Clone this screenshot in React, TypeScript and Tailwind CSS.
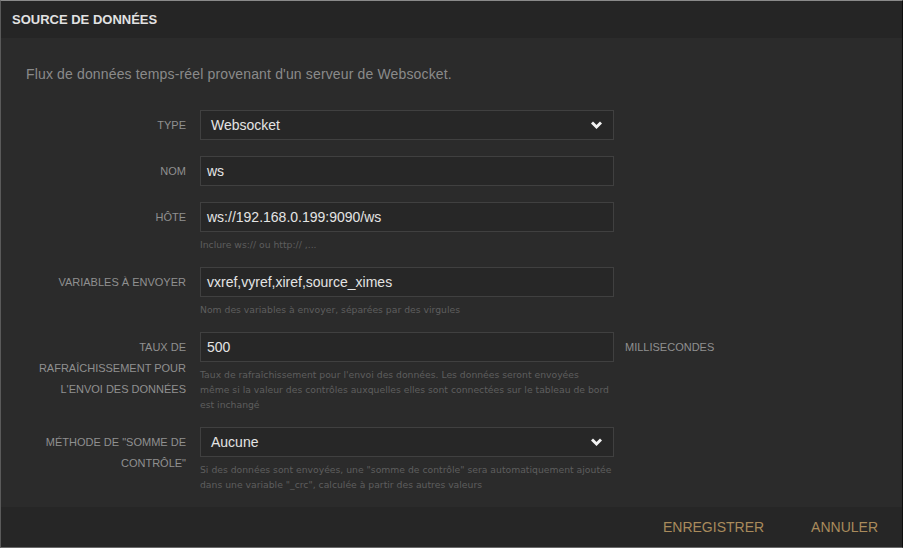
const LABEL = 'w-[160px] shrink-0 pt-[5px] text-right text-[11px] uppercase leading-[21px] text-[#909090]';
const HELP = "mt-[5px] mb-[-1px] whitespace-nowrap font-['DejaVu_Sans',sans-serif] text-[9.25px] leading-[15px] text-[#5e5e5e]";

function Chevron() {
    return (
        <svg className="h-[9px] w-[11px]" viewBox="0 0 11 9" fill="none" stroke="#f2f2f2" strokeWidth="3" strokeLinecap="square">
            <path d="M2 2.5 L5.5 6 L9 2.5" />
        </svg>
    );
}

function Field({
    label,
    value,
    help,
    select,
    unit,
}: {
    label: React.ReactNode;
    value: string;
    help?: React.ReactNode;
    select?: boolean;
    unit?: string;
}) {
    return (
        <div className="mb-[16px] flex gap-[14px]">
            <div className={LABEL}>{label}</div>
            <div className="w-[414px] shrink-0">
                <div
                    className={`flex h-[30px] items-center justify-between border border-[#404040] bg-[#272727] text-[14px] text-[#e4e4e4] ${
                        select ? 'pl-[10px] pr-[11px]' : 'pl-[6px]'
                    }`}
                >
                    <span>{value}</span>
                    {select && <Chevron />}
                </div>
                {help && <div className={HELP}>{help}</div>}
            </div>
            {unit && (
                <div className="-ml-[3px] flex h-[30px] items-center text-[11px] uppercase text-[#909090]">{unit}</div>
            )}
        </div>
    );
}

export default function App() {
    return (
        <div className="flex h-[548px] w-[903px] flex-col border-t border-r border-b border-l border-t-[#8a8a8a] border-r-[#0e0e0e] border-b-[#6a6a6a] border-l-[#5a5a5a] bg-[#2b2b2b] font-['Liberation_Sans',Arial,sans-serif]">
            {/* Header */}
            <div className="flex h-[37px] shrink-0 items-center bg-[#252525] pl-[11px] text-[13px] font-bold text-[#e2e2e2]">
                SOURCE DE DONNÉES
            </div>

            {/* Body */}
            <div className="flex-1 pl-[25px] pt-[26px]">
                <p className="mb-[26px] text-[14px] leading-[20px] tracking-[0.15px] text-[#8a8a8a]">
                    Flux de données temps-réel provenant d'un serveur de Websocket.
                </p>

                <Field label="Type" value="Websocket" select />
                <Field label="Nom" value="ws" />
                <Field label="Hôte" value="ws://192.168.0.199:9090/ws" help="Inclure ws:// ou http:// ,..." />
                <Field
                    label="Variables à envoyer"
                    value="vxref,vyref,xiref,source_ximes"
                    help="Nom des variables à envoyer, séparées par des virgules"
                />
                <Field
                    label={
                        <>
                            Taux de
                            <br />
                            rafraîchissement pour
                            <br />
                            l'envoi des données
                        </>
                    }
                    value="500"
                    unit="Millisecondes"
                    help={
                        <>
                            Taux de rafraîchissement pour l'envoi des données. Les données seront envoyées
                            <br />
                            même si la valeur des contrôles auxquelles elles sont connectées sur le tableau de bord
                            <br />
                            est inchangé
                        </>
                    }
                />
                <Field
                    label={
                        <>
                            Méthode de "somme de
                            <br />
                            contrôle"
                        </>
                    }
                    value="Aucune"
                    select
                    help={
                        <>
                            Si des données sont envoyées, une "somme de contrôle" sera automatiquement ajoutée
                            <br />
                            dans une variable "_crc", calculée à partir des autres valeurs
                        </>
                    }
                />
            </div>

            {/* Footer */}
            <div className="flex h-[40px] shrink-0 items-center justify-end gap-[47px] bg-[#262626] pr-[24px] text-[14px] text-[#a98b5c]">
                <span>ENREGISTRER</span>
                <span>ANNULER</span>
            </div>
        </div>
    );
}
